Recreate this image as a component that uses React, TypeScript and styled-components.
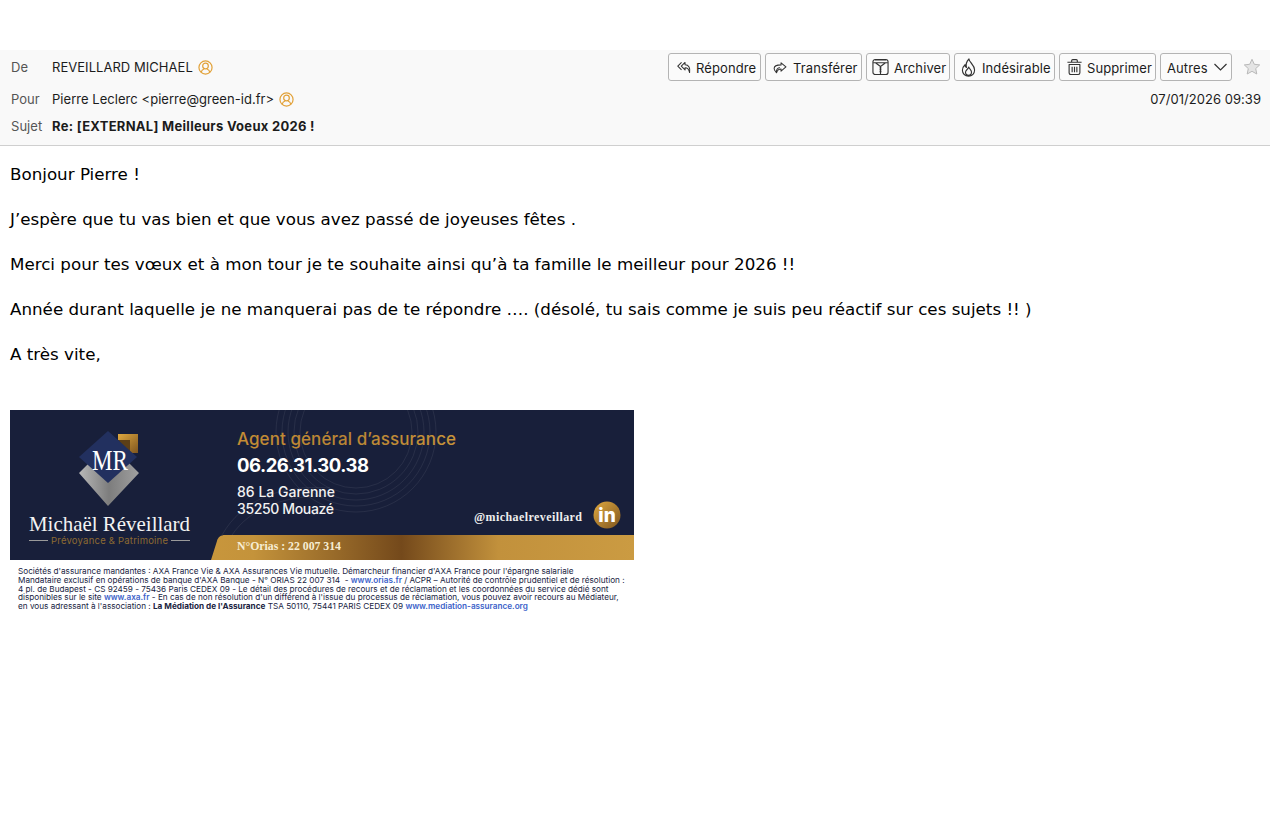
import styled, { createGlobalStyle } from "styled-components";

const GlobalStyle = createGlobalStyle`
  html, body {
    margin: 0;
    padding: 0;
    background: #fff;
  }
`;

const ContactIcon = () => (
  <ContactSvg viewBox="0 0 16 16" fill="none" stroke="#e2a23a" strokeWidth="1.300">
    <circle cx="8" cy="8" r="7" />
    <circle cx="8" cy="6.400" r="3" />
    <path d="M3.400 13c.5-2.100 1.900-3 3.100-3.400M12.600 13c-.5-2.100-1.900-3-3.100-3.400" />
  </ContactSvg>
);

const ReplyIcon = () => (
  <ToolIcon $w={14} $h={15} viewBox="0 0 16 16">
    <path d="M5.200 2.200.9 6.500l4.300 4.300" />
    <path d="M9.200 2.200 4.900 6.500l4.300 4.300V8.300c2.600 0 4.300 1 5.200 5.500.9-5.300-.8-9-5.200-9z" />
  </ToolIcon>
);

const ForwardIcon = () => (
  <ToolIcon $w={14} $h={15} viewBox="0 0 16 16">
    <path d="M9.200 2.600 14.800 7.400 9.200 12.200V9.600C6.700 9.600 5 10.600 4 14c-.9-1.200-2.700-2.600-2.700-4.800 0-3 3.400-4.200 7.900-4.200z" />
    <path d="M4 14c-.3-2.300.6-5.200 3.800-6" />
  </ToolIcon>
);

const ArchiveIcon = () => (
  <ToolIcon $w={17} $h={18} viewBox="0 0 18 18">
    <rect x="1" y="1" width="16" height="16" rx="2.500" />
    <path d="M1.200 4.500h15.600M3 1.500h12M4 4.800 9 8.500l5-3.700M9 8.500v8" />
    <path d="M7.800 10h2.400M7.800 12h2.400M7.800 14h2.400" strokeWidth="0.800" />
  </ToolIcon>
);

const FlameIcon = () => (
  <ToolIcon $w={15} $h={19} viewBox="0 0 16 19" preserveAspectRatio="none">
    <path d="M8.500 1c.4 3.600 6 5.700 6 11.100 0 3.700-2.900 6-6.500 6s-6.500-2.300-6.500-5.800c0-2.500 1.300-4.300 2.800-5.600.1 1.400.5 2.400 1.500 2.800C5 6.300 6.300 3 8.500 1z" />
    <path d="M8.300 9c.4 1.900 2.900 2.800 2.900 5.100 0 1.900-1.400 3.300-3.200 3.300s-3.200-1.400-3.200-3.200c0-2 2.800-3 3.500-5.200z" />
  </ToolIcon>
);

const TrashIcon = () => (
  <ToolIcon $w={17} $h={18} viewBox="0 0 18 18">
    <path d="M1.500 4h15M6 3.800V2.300c0-.7.500-1.100 1.100-1.100h3.800c.6 0 1.100.4 1.100 1.100v1.500" />
    <path d="M3.300 6.300h11.400v8.900c0 1-.7 1.700-1.700 1.700H5c-1 0-1.700-.7-1.700-1.700zM6.500 8.800v5.700M9 8.800v5.700M11.500 8.800v5.700" />
  </ToolIcon>
);

const Chevron = () => (
  <ChevronSvg viewBox="0 0 14 8">
    <path d="M1 1l6 6 6-6" />
  </ChevronSvg>
);

const toolbar = [
  { label: "Répondre", icon: <ReplyIcon />, width: 93, pad: 8, gap: 5 },
  { label: "Transférer", icon: <ForwardIcon />, width: 97, pad: 7, gap: 6 },
  { label: "Archiver", icon: <ArchiveIcon />, width: 84, pad: 5, gap: 5 },
  { label: "Indésirable", icon: <FlameIcon />, width: 101, pad: 6, gap: 6 },
  { label: "Supprimer", icon: <TrashIcon />, width: 97, pad: 6, gap: 4 },
];

const Banner = () => (
  <BannerSvg viewBox="0 0 624 150">
    <defs>
      <linearGradient id="strip" x1="0" x2="1" y1="0" y2="0">
        <stop offset="0" stopColor="#c8963c" />
        <stop offset="0.1" stopColor="#c4933b" />
        <stop offset="0.45" stopColor="#74491b" />
        <stop offset="0.68" stopColor="#c2913c" />
        <stop offset="1" stopColor="#cb9b42" />
      </linearGradient>
      <linearGradient id="gold" x1="0" x2="1" y1="0" y2="1">
        <stop offset="0" stopColor="#e0a93f" />
        <stop offset="1" stopColor="#7e551f" />
      </linearGradient>
      <linearGradient id="agent" x1="0" x2="1" y1="0" y2="0">
        <stop offset="0" stopColor="#c48d34" />
        <stop offset="0.5" stopColor="#b98534" />
        <stop offset="1" stopColor="#c79439" />
      </linearGradient>
      <linearGradient id="steel" x1="0" x2="1" y1="0" y2="0">
        <stop offset="0" stopColor="#b8b8b8" />
        <stop offset="0.5" stopColor="#7d7d7d" />
        <stop offset="1" stopColor="#a0a0a0" />
      </linearGradient>
    </defs>
    <rect width="624" height="150" fill="#181f3a" />
    <g fill="none" stroke="#fff" strokeOpacity="0.07">
      <circle cx="346" cy="22" r="56" />
      <circle cx="346" cy="22" r="62" />
      <circle cx="346" cy="22" r="68" />
      <circle cx="346" cy="22" r="74" />
      <circle cx="346" cy="22" r="80" />
      <path d="M212 125C232 90 270 74 320 78M222 125C240 98 276 84 324 86" />
    </g>
    <path d="M201 150 207 131C208 127 211 125 215 125H624V150z" fill="url(#strip)" />

    <path d="M108 24H128V43L120 43 120 30 108 30z" fill="url(#gold)" />
    <path d="M108 30H120V43z" fill="#5c3f18" />
    <path d="M69 63 80 52 98 70 118 52 129 63 98 96z" fill="url(#steel)" />
    <path d="M98 21 127 47 98 73 69 47z" fill="#22305f" />
    <text x="100" y="60" textAnchor="middle" fontFamily="'Liberation Serif', serif" fontSize="29" fill="#fff" textLength="36" lengthAdjust="spacingAndGlyphs">MR</text>
    <text x="19" y="121" fontFamily="'Liberation Serif', serif" fontSize="22" fill="#f3f3f3" textLength="161" lengthAdjust="spacingAndGlyphs">Michaël Réveillard</text>
    <path d="M19 130.500H38M161 130.500H180" stroke="#9a9a9a" />
    <text x="41" y="134" fontFamily="Inter, sans-serif" fontSize="9.500" fill="#8d6a32" textLength="117">Prévoyance &amp; Patrimoine</text>

    <text x="227" y="35" fontFamily="Inter, sans-serif" fontSize="17" fontWeight="500" fill="url(#agent)" textLength="219">Agent général d’assurance</text>
    <text x="227" y="62" fontFamily="Inter, sans-serif" fontSize="18.500" fontWeight="700" fill="#fff" textLength="132">06.26.31.30.38</text>
    <text x="227" y="87" fontFamily="Inter, sans-serif" fontSize="14" fontWeight="500" fill="#f2f2f2" textLength="98">86 La Garenne</text>
    <text x="227" y="104" fontFamily="Inter, sans-serif" fontSize="14" fontWeight="500" fill="#f2f2f2" textLength="97">35250 Mouazé</text>
    <text x="464" y="111" fontFamily="'Liberation Serif', serif" fontSize="12" fontWeight="700" fill="#eee" textLength="108">@michaelreveillard</text>
    <circle cx="597" cy="105" r="13.500" fill="url(#gold)" />
    <text x="597" y="112" textAnchor="middle" fontFamily="Inter, sans-serif" fontSize="19" fontWeight="800" fill="#fff">in</text>
    <text x="227" y="140" fontFamily="'Liberation Serif', serif" fontSize="12.500" fontWeight="700" fill="#f7edd3" textLength="104" lengthAdjust="spacingAndGlyphs">N°Orias : 22 007 314</text>
  </BannerSvg>
);

const App = () => (
  <>
    <GlobalStyle />
    <Page>
      <MailHeader>
        <TopRow>
          <Field>
            <Label>De</Label>
            <Value>REVEILLARD MICHAEL</Value>
            <ContactIcon />
          </Field>
          <Toolbar>
            {toolbar.map((item) => (
              <ToolButton key={item.label} $width={item.width} $pad={item.pad} $gap={item.gap}>
                {item.icon}
                <ToolLabel>{item.label}</ToolLabel>
              </ToolButton>
            ))}
            <ToolButton $width={72} $pad={6} $gap={5}>
              <ToolLabel>Autres</ToolLabel>
              <Chevron />
            </ToolButton>
            <StarSvg viewBox="0 0 18 18">
              <path d="M9 1.300l2.300 5 5.400.6-4 3.700 1.100 5.400L9 13.300 4.200 16l1.100-5.400-4-3.700 5.400-.6z" />
            </StarSvg>
          </Toolbar>
        </TopRow>
        <MiddleRow>
          <Field>
            <Label>Pour</Label>
            <Value>Pierre Leclerc &lt;pierre@green-id.fr&gt;</Value>
            <ContactIcon />
          </Field>
          <DateText>07/01/2026 09:39</DateText>
        </MiddleRow>
        <SubjectRow>
          <Label>Sujet</Label>
          <Subject>Re: [EXTERNAL] Meilleurs Voeux 2026 !</Subject>
        </SubjectRow>
      </MailHeader>
      <MailBody>
        <Paragraph>Bonjour Pierre !</Paragraph>
        <Paragraph>J’espère que tu vas bien et que vous avez passé de joyeuses fêtes .</Paragraph>
        <Paragraph>Merci pour tes vœux et à mon tour je te souhaite ainsi qu’à ta famille le meilleur pour 2026 !!</Paragraph>
        <Paragraph>Année durant laquelle je ne manquerai pas de te répondre …. (désolé, tu sais comme je suis peu réactif sur ces sujets !! )</Paragraph>
        <Paragraph>A très vite,</Paragraph>
        <Signature>
          <Banner />
          <Legal>
            <LegalLine>Sociétés d'assurance mandantes : AXA France Vie &amp; AXA Assurances Vie mutuelle. Démarcheur financier d'AXA France pour l'épargne salariale</LegalLine>
            <LegalLine>Mandataire exclusif en opérations de banque d'AXA Banque - N° ORIAS 22 007 314&nbsp; - <LegalLink>www.orias.fr</LegalLink> / ACPR – Autorité de contrôle prudentiel et de résolution :</LegalLine>
            <LegalLine>4 pl. de Budapest - CS 92459 - 75436 Paris CEDEX 09 - Le détail des procédures de recours et de réclamation et les coordonnées du service dédié sont</LegalLine>
            <LegalLine>disponibles sur le site <LegalLink>www.axa.fr</LegalLink> - En cas de non résolution d'un différend à l'issue du processus de réclamation, vous pouvez avoir recours au Médiateur,</LegalLine>
            <LegalLine>en vous adressant à l'association : <b>La Médiation de l'Assurance</b> TSA 50110, 75441 PARIS CEDEX 09 <LegalLink>www.mediation-assurance.org</LegalLink></LegalLine>
          </Legal>
        </Signature>
      </MailBody>
    </Page>
  </>
);

const Page = styled.div`
  padding-top: 50px;
  min-height: 780px;
  background: #fff;
`;

const MailHeader = styled.header`
  height: 96px;
  box-sizing: border-box;
  padding: 3px 9px 0 11px;
  background: #f9f9f9;
  border-bottom: 1px solid #cfcfcf;
  font-family: Inter, "Liberation Sans", sans-serif;
  font-size: 13px;
  letter-spacing: 0.04px;
  color: #1c1c1c;
`;

const TopRow = styled.div`
  display: flex;
  justify-content: space-between;
  align-items: center;
  height: 28px;
`;

const MiddleRow = styled.div`
  display: flex;
  justify-content: space-between;
  align-items: center;
  height: 18px;
  margin-top: 9px;
`;

const SubjectRow = styled.div`
  display: flex;
  align-items: center;
  height: 18px;
  margin-top: 9px;
`;

const Field = styled.div`
  display: flex;
  align-items: center;
`;

const Label = styled.span`
  width: 41px;
  color: #555;
`;

const Value = styled.span`
  color: #1c1c1c;
`;

const Subject = styled.span`
  font-weight: 700;
  letter-spacing: 0.29px;
`;

const DateText = styled.span`
  color: #1c1c1c;
`;

const ContactSvg = styled.svg`
  width: 15px;
  height: 15px;
  margin-left: 5px;
`;

const Toolbar = styled.div`
  display: flex;
  align-items: center;
  gap: 4px;
`;

const ToolButton = styled.div<{ $width: number; $pad: number; $gap: number }>`
  display: flex;
  align-items: center;
  gap: ${({ $gap }) => $gap}px;
  box-sizing: border-box;
  width: ${({ $width }) => $width}px;
  height: 28px;
  padding-left: ${({ $pad }) => $pad}px;
  background: #fbfbfb;
  border: 1px solid #b4b4b4;
  border-radius: 3px;
  white-space: nowrap;
`;

const ToolLabel = styled.span`
  letter-spacing: 0.1px;
  padding-top: 1px;
`;

const ToolIcon = styled.svg<{ $w: number; $h: number }>`
  width: ${({ $w }) => $w}px;
  height: ${({ $h }) => $h}px;
  flex: none;
  fill: none;
  stroke: #333;
  stroke-width: 1.200;
  stroke-linejoin: round;
`;

const ChevronSvg = styled.svg`
  width: 15px;
  height: 8px;
  fill: none;
  stroke: #333;
  stroke-width: 1.200;
`;

const StarSvg = styled.svg`
  width: 18px;
  height: 18px;
  margin-left: 7px;
  fill: #e4e4e4;
  stroke: #b9b9b9;
  stroke-width: 1;
`;

const MailBody = styled.main`
  padding: 17px 0 0 10px;
  font-family: "DejaVu Sans", sans-serif;
  font-size: 16.720px;
  line-height: 22px;
  color: #000;
`;

const Paragraph = styled.p`
  margin: 0 0 23px;
`;

const Signature = styled.div`
  width: 624px;
  margin-top: 45px;
`;

const BannerSvg = styled.svg`
  display: block;
  width: 624px;
  height: 150px;
`;

const Legal = styled.div`
  padding: 7px 0 0 8px;
  font-family: Inter, "Liberation Sans", sans-serif;
  font-size: 8.180px;
  line-height: 8.800px;
  color: #20243f;
`;

const LegalLine = styled.div`
  white-space: nowrap;
`;

const LegalLink = styled.span`
  color: #3c62c9;
  font-weight: 600;
`;

export default App;
